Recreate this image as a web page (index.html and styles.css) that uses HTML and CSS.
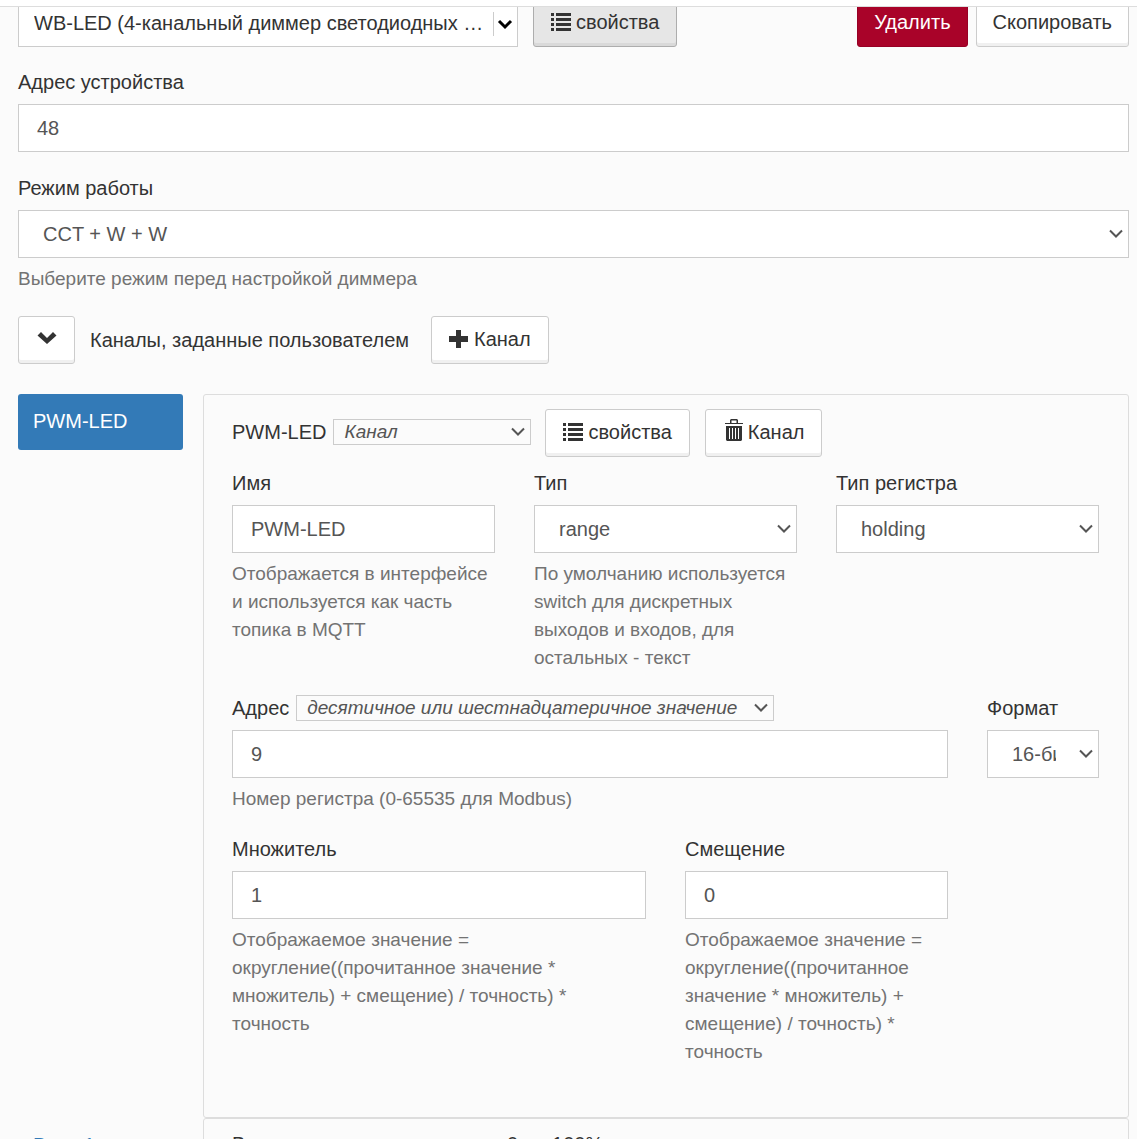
FILE: index.html
```html
<!DOCTYPE html>
<html lang="ru">
<head>
<meta charset="utf-8">
<meta name="viewport" content="width=device-width, initial-scale=1">
<title>WB-LED</title>
<link rel="stylesheet" href="styles.css">
</head>
<body>
<svg class="sprite" aria-hidden="true">
  <symbol id="list" viewBox="0 0 20 18">
    <path d="M0 0h3v3H0zM5 0h15v3H5zM0 5h3v3H0zM5 5h15v3H5zM0 10h3v3H0zM5 10h15v3H5zM0 15h3v3H0zM5 15h15v3H5z"/>
  </symbol>
  <symbol id="plus" viewBox="0 0 20 18">
    <path d="M7 0h5v6h7v6h-7v6H7v-6H0V6h7z"/>
  </symbol>
  <symbol id="down" viewBox="0 0 20 14">
    <path d="M4 0l6 6 6-6 3.500 3.500L10 12 .5 3.500z"/>
  </symbol>
  <symbol id="trash" viewBox="0 0 18 22">
    <path d="M0 4h5V1l1-1h6l1 1v3h5v1H0zM6.500 1.500V4h5V1.500z" fill-rule="evenodd"/>
    <path d="M1 7h16v14l-1 1H2l-1-1zM4 9v11h1V9zM7 9v11h1V9zM10 9v11h1V9zM13 9v11h1V9z" fill-rule="evenodd"/>
  </symbol>
</svg>

<header class="topbar"></header>

<main class="editor">
  <div class="device">
    <select class="device-type" aria-label="Тип устройства">
      <option>WB-LED (4-канальный диммер светодиодных …</option>
    </select>
    <button type="button" class="btn btn-active"><svg class="icon-list"><use href="#list"/></svg>свойства</button>
    <div class="device-actions">
      <button type="button" class="btn btn-danger">Удалить</button>
      <button type="button" class="btn">Скопировать</button>
    </div>
  </div>

  <div class="field">
    <label for="slave">Адрес устройства</label>
    <input id="slave" class="control" type="text" value="48">
  </div>

  <div class="field">
    <label for="mode">Режим работы</label>
    <select id="mode" class="control"><option>CCT + W + W</option></select>
    <p class="help">Выберите режим перед настройкой диммера</p>
  </div>

  <div class="group-head">
    <button type="button" class="btn btn-toggle" aria-label="Свернуть"><svg class="icon-down"><use href="#down"/></svg></button>
    <span class="group-title">Каналы, заданные пользователем</span>
    <button type="button" class="btn"><svg class="icon-plus"><use href="#plus"/></svg>Канал</button>
  </div>

  <div class="channels">
    <a class="tab tab-active" href="#pwm-led">PWM-LED</a>
    <section id="pwm-led" class="panel">
      <div class="panel-head">
        <label for="kind">PWM-LED</label>
        <select id="kind" class="inline-select kind"><option>Канал</option></select>
        <div class="panel-actions">
          <button type="button" class="btn"><svg class="icon-list"><use href="#list"/></svg>свойства</button>
          <button type="button" class="btn"><svg class="icon-trash"><use href="#trash"/></svg>Канал</button>
        </div>
      </div>

      <div class="grid">
        <div class="field span-4">
          <label for="name">Имя</label>
          <input id="name" class="control" type="text" value="PWM-LED">
          <p class="help">Отображается в интерфейсе и используется как часть топика в MQTT</p>
        </div>
        <div class="field span-4">
          <label for="type">Тип</label>
          <select id="type" class="control"><option>range</option></select>
          <p class="help">По умолчанию используется switch для дискретных выходов и входов, для остальных - текст</p>
        </div>
        <div class="field span-4">
          <label for="reg">Тип регистра</label>
          <select id="reg" class="control"><option>holding</option></select>
        </div>

        <div class="field span-10">
          <div class="label-row">
            <label for="address">Адрес</label>
            <select class="inline-select notation" aria-label="Вид значения"><option>десятичное или шестнадцатеричное значение</option></select>
          </div>
          <input id="address" class="control" type="text" value="9">
          <p class="help">Номер регистра (0-65535 для Modbus)</p>
        </div>
        <div class="field span-2">
          <label for="format">Формат</label>
          <select id="format" class="control"><option>16-битное целое</option></select>
        </div>

        <div class="field span-6">
          <label for="scale">Множитель</label>
          <input id="scale" class="control" type="text" value="1">
          <p class="help">Отображаемое значение = округление((прочитанное значение * множитель) + смещение) / точность) * точность</p>
        </div>
        <div class="field span-4">
          <label for="offset">Смещение</label>
          <input id="offset" class="control" type="text" value="0">
          <p class="help">Отображаемое значение = округление((прочитанное значение * множитель) + смещение) / точность) * точность</p>
        </div>
      </div>
    </section>

    <a class="tab" href="#input-1">Вход 1</a>
    <section id="input-1" class="panel">
      <div class="panel-head">Вход, где уровень яркости от 0 до 100%</div>
    </section>
  </div>
</main>
</body>
</html>
```
FILE: styles.css
```css
* {
  box-sizing: border-box;
}

body {
  display: flex;
  flex-direction: column;
  height: 100vh;
  margin: 0;
  overflow: hidden;
  background: #fbfbfb;
  color: #333;
  font: 20px/28px "Liberation Sans", Arial, sans-serif;
}

.sprite {
  display: none;
}

.topbar {
  flex: none;
  height: 7px;
  border-bottom: 1px solid #ddd;
  background: #fff;
}

.editor {
  flex: 1;
  min-height: 0;
  padding: 0 8px 0 18px;
  overflow: hidden;
}

.device {
  display: flex;
  gap: 15px;
  margin: -8px 0 21px;
}

.device-actions {
  display: flex;
  gap: 8px;
  margin-left: auto;
}

select {
  appearance: none;
  border-radius: 0;
}

input,
select,
button {
  margin: 0;
  font: inherit;
}

.device-type {
  width: 500px;
  height: 48px;
  padding: 0 32px 0 15px;
  border: 1px solid #ccc;
  background: #fff url("data:image/svg+xml,%3Csvg xmlns='http://www.w3.org/2000/svg' width='24' height='24'%3E%3Cpath d='M.5 0v24' stroke='%23ccc'/%3E%3Cpath d='M6 9l6 6 6-6' fill='none' stroke='%23000' stroke-width='3'/%3E%3C/svg%3E") no-repeat right 0 top 12px;
  color: #333;
}

.btn {
  display: flex;
  align-items: center;
  justify-content: center;
  height: 48px;
  padding: 0 17px 2px;
  border: 1px solid #ccc;
  border-radius: 3px;
  background: #fff;
  box-shadow: inset 0 -3px #f0f0f0;
  color: #333;
}

.btn svg {
  flex: none;
  fill: currentColor;
}

.btn-active {
  border-color: #adadad;
  background: #e6e6e6;
  box-shadow: inset 0 -3px #d9d9d9;
}

.device-actions .btn {
  padding: 0 16px 2px;
}

.btn-danger {
  border-color: #970025;
  background: #a90329;
  box-shadow: none;
  color: #fff;
}

.btn-toggle {
  width: 57px;
}

.icon-list {
  width: 20px;
  height: 18px;
  margin-right: 5px;
}

.icon-plus {
  width: 20px;
  height: 18px;
  margin-right: 5px;
}

.icon-down {
  width: 20px;
  height: 14px;
}

.icon-trash {
  width: 18px;
  height: 22px;
  margin: 0 5px 4px 2px;
}

.field {
  display: flex;
  flex-direction: column;
  min-width: 0;
}

.editor > .field {
  margin-bottom: 22px;
}

.control {
  width: 100%;
  height: 48px;
  margin-top: 8px;
  padding: 0 18px;
  border: 1px solid #ccc;
  background-color: #fff;
  color: #555;
}

select.control {
  padding: 0 42px 0 24px;
}

select.control,
.inline-select {
  background-image: url("data:image/svg+xml,%3Csvg xmlns='http://www.w3.org/2000/svg' width='14' height='10'%3E%3Cpath d='M1 1.500l6 6 6-6' fill='none' stroke='%23555' stroke-width='2'/%3E%3C/svg%3E");
  background-position: right 5px center;
  background-repeat: no-repeat;
}

.inline-select {
  height: 26px;
  padding: 0 24px 0 10px;
  border: 1px solid #ccc;
  background-color: #fbfbfb;
  color: #555;
  font-size: 19px;
  font-style: italic;
  line-height: 24px;
}

.kind {
  width: 198px;
}

.notation {
  width: 478px;
}

.help {
  margin: 7px 0 0;
  color: #737373;
  font-size: 19px;
}

.group-head {
  display: flex;
  align-items: center;
  margin: 23px 0 30px;
}

.group-title {
  margin: 0 22px 0 15px;
}

.channels {
  display: grid;
  grid-template-columns: 165px minmax(0, 1fr);
  column-gap: 20px;
  align-items: start;
}

.tab {
  height: 56px;
  padding: 13px 15px;
  border-radius: 3px;
  color: #337ab7;
  text-decoration: none;
}

.tab-active {
  background: #337ab7;
  color: #fff;
}

.panel {
  padding: 11px 29px 51px 28px;
  border: 1px solid #ddd;
  border-radius: 3px;
}

.panel-head {
  display: flex;
  align-items: center;
  gap: 7px;
  margin-bottom: 12px;
}

.panel-actions {
  display: flex;
  gap: 15px;
  margin: 3px 0 0 7px;
}

.grid {
  display: grid;
  grid-template-columns: repeat(12, minmax(0, 1fr));
  gap: 22px 39px;
}

.span-2 {
  grid-column: span 2;
}

.span-4 {
  grid-column: span 4;
}

.span-6 {
  grid-column: span 6;
}

.span-10 {
  grid-column: span 10;
}

.label-row {
  display: flex;
  align-items: center;
  gap: 7px;
}
```
